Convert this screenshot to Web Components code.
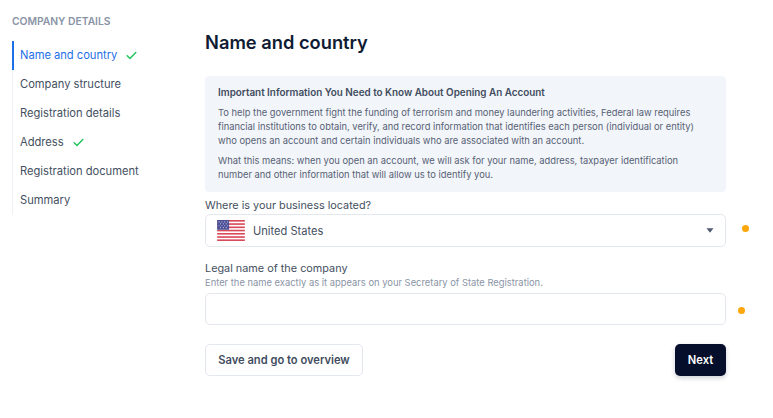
<!DOCTYPE html>
<html lang="en"><head><meta charset="utf-8"><title>Name and country</title>
<style>
html,body{margin:0;padding:0;background:#fff}
body{font-family:Inter,"Noto Sans",sans-serif;width:773px;height:418px;overflow:hidden}
</style></head><body>
<app-page>
  <side-nav slot="side" heading="COMPANY DETAILS">
    <nav-item active done>Name and country</nav-item>
    <nav-item>Company structure</nav-item>
    <nav-item>Registration details</nav-item>
    <nav-item done>Address</nav-item>
    <nav-item>Registration document</nav-item>
    <nav-item>Summary</nav-item>
  </side-nav>
  <h1-title>Name and country</h1-title>
  <info-box heading="Important Information You Need to Know About Opening An Account">
    <p>To help the government fight the funding of terrorism and money laundering activities, Federal law requires financial institutions to obtain, verify, and record information that identifies each person (individual or entity) who opens an account and certain individuals who are associated with an account.</p>
    <p>What this means: when you open an account, we will ask for your name, address, taxpayer identification number and other information that will allow us to identify you.</p>
  </info-box>
  <form-field label="Where is your business located?" dot="16" dy="-5" style="margin-top:5px">
    <country-select>United States</country-select>
  </form-field>
  <form-field label="Legal name of the company" hint="Enter the name exactly as it appears on your Secretary of State Registration." dot="12" dy="-2" style="margin-top:13px">
    <text-box></text-box>
  </form-field>
  <form-actions></form-actions>
</app-page>
<script>
function def(name,html,init){
  customElements.define(name,class extends HTMLElement{
    connectedCallback(){
      if(this.shadowRoot)return;
      const r=this.attachShadow({mode:'open'});
      r.innerHTML=html;
      if(init)init(this,r);
    }
  });
}
def('app-page',`<style>
:host{display:grid;grid-template-columns:205px 521px;height:418px}
.side{padding:14px 0 0 12px}
.main{display:flex;flex-direction:column;padding-top:30px;min-width:0}
</style><div class="side"><slot name="side"></slot></div><div class="main"><slot></slot></div>`);
def('side-nav',`<style>
:host{display:block;width:180px}
h2{margin:0 0 13px;font:600 10.3px/14px Inter,sans-serif;color:#8a94a6;white-space:nowrap}
.list{display:flex;flex-direction:column;border-left:1px solid #eef1f5}
</style><h2></h2><div class="list"><slot></slot></div>`,(h,r)=>{r.querySelector('h2').textContent=h.getAttribute('heading')});
def('nav-item',`<style>
:host{display:flex;align-items:center;box-sizing:border-box;height:29px;margin-left:-1px;padding:0 0 1px 6px;border-left:2px solid transparent;font:400 11.15px/18px Inter,sans-serif;color:#444f61;white-space:nowrap}
:host([active]){border-left-color:#1d6fe8;color:#1d6fe8}
svg{display:none;margin-left:9px;width:11px;height:9px}
:host([done]) svg{display:block}
</style><slot></slot><svg viewBox="0 0 11 9" fill="none" stroke="#22c55e" stroke-width="1.5" stroke-linecap="round" stroke-linejoin="round"><path d="M1.2 4.8 4 7.5 9.8 1.5"/></svg>`);
def('h1-title',`<style>
:host{display:block;font:600 18.3px/24px Inter,sans-serif;color:#0f1b33;margin-bottom:22px;white-space:nowrap}
</style><slot></slot>`);
def('info-box',`<style>
:host{display:block;box-sizing:border-box;height:116px;padding:9px 18px 9px 13px;background:#f2f5f9;border-radius:4px;color:#566175;font:400 9.35px/14px Inter,sans-serif}
b{display:block;font-size:9.9px;font-weight:600;color:#414c60;margin-bottom:7px;white-space:nowrap}
::slotted(p){margin:0 0 6px}
</style><b></b><slot></slot>`,(h,r)=>{r.querySelector('b').textContent=h.getAttribute('heading')});
def('form-field',`<style>
:host{display:block}
label{display:block;font:400 10.85px/16px Inter,sans-serif;color:#444f61;white-space:nowrap}
small{display:block;font:400 9.4px/14px Inter,sans-serif;color:#8a94a6;margin-bottom:3px;white-space:nowrap}
small[hidden]{display:none}
.row{position:relative}
small[hidden] + .row{padding-top:1px}
i{position:absolute;top:50%;width:7px;height:7px;border-radius:50%;background:#fda70a}
</style><label></label><small hidden></small><div class="row"><slot></slot><i></i></div>`,(h,r)=>{
  r.querySelector('label').textContent=h.getAttribute('label');
  const s=r.querySelector('small'),t=h.getAttribute('hint');
  if(t){s.textContent=t;s.hidden=false}
  const d=r.querySelector('i');
  d.style.left=(521+ +h.getAttribute('dot'))+'px';
  d.style.marginTop=h.getAttribute('dy')+'px';
});
def('country-select',`<style>
:host{display:flex;align-items:center;box-sizing:border-box;height:33px;padding:0 11px;border:1px solid #e3e7ee;border-radius:5px;font:400 11.1px/18px Inter,sans-serif;color:#444f61}
svg.f{width:28px;height:21px;margin-right:8px;flex:none}
svg.c{width:8px;height:5px;margin-left:auto;flex:none}
</style><svg class="f" viewBox="0 0 29 22"><rect width="29" height="22" fill="#fff"/><g fill="#d8495a"><rect y="0" width="29" height="1.7"/><rect y="3.4" width="29" height="1.7"/><rect y="6.8" width="29" height="1.7"/><rect y="10.2" width="29" height="1.7"/><rect y="13.6" width="29" height="1.7"/><rect y="17" width="29" height="1.7"/><rect y="20.3" width="29" height="1.7"/></g><rect width="12.5" height="10.2" fill="#4a4f96"/><g fill="#c9cbe6"><circle cx="2" cy="2" r=".6"/><circle cx="5" cy="2" r=".6"/><circle cx="8" cy="2" r=".6"/><circle cx="11" cy="2" r=".6"/><circle cx="3.5" cy="4" r=".6"/><circle cx="6.5" cy="4" r=".6"/><circle cx="9.5" cy="4" r=".6"/><circle cx="2" cy="6" r=".6"/><circle cx="5" cy="6" r=".6"/><circle cx="8" cy="6" r=".6"/><circle cx="11" cy="6" r=".6"/><circle cx="3.5" cy="8" r=".6"/><circle cx="6.5" cy="8" r=".6"/><circle cx="9.5" cy="8" r=".6"/></g></svg><slot></slot><svg class="c" viewBox="0 0 8 5"><path d="M.5.3h7L4 4.8z" fill="#4f5b70"/></svg>`);
def('text-box',`<style>
:host{display:block;box-sizing:border-box;height:32px;border:1px solid #e3e7ee;border-radius:5px;background:#fff}
</style>`);
def('form-actions',`<style>
:host{display:flex;justify-content:space-between;margin-top:19px}
button{box-sizing:border-box;height:32px;border-radius:5px;font:600 11.15px/16px Inter,sans-serif;cursor:pointer}
.s{width:158px;border:1px solid #e3e7ee;background:#fff;color:#414c60}
.p{width:51px;border:0;background:#050f2c;color:#fff;box-shadow:0 2px 5px rgba(5,15,44,.2)}
</style><button class="s">Save and go to overview</button><button class="p">Next</button>`);
</script>
</body></html>
